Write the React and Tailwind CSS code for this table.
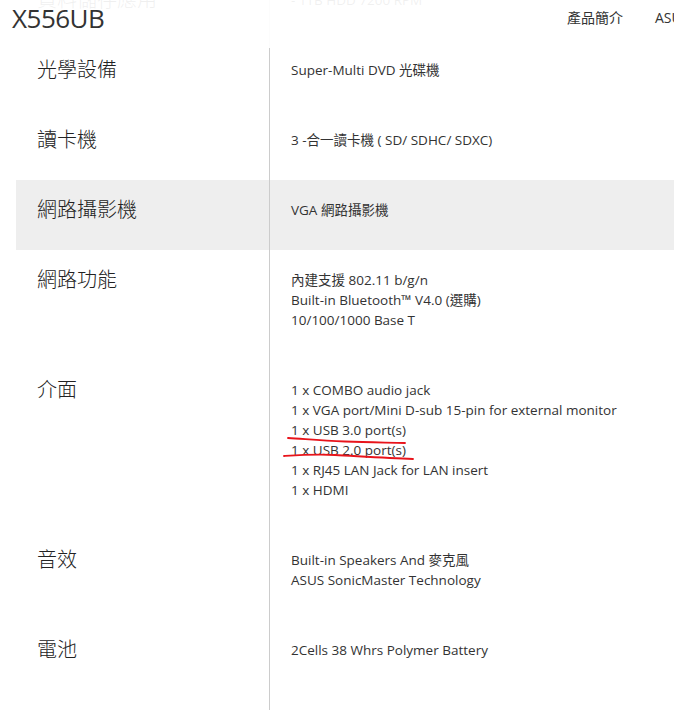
import React from 'react';

const specs = [
  { label: '資料儲存應用', lines: ['- 1TB HDD 7200 RPM'] },
  { label: '光學設備', lines: ['Super-Multi DVD 光碟機'] },
  { label: '讀卡機', lines: ['3 -合一讀卡機 ( SD/ SDHC/ SDXC)'] },
  { label: '網路攝影機', lines: ['VGA 網路攝影機'], shaded: true },
  {
    label: '網路功能',
    lines: ['內建支援 802.11 b/g/n', 'Built-in Bluetooth™ V4.0 (選購)', '10/100/1000 Base T'],
  },
  {
    label: '介面',
    lines: [
      '1 x COMBO audio jack',
      '1 x VGA port/Mini D-sub 15-pin for external monitor',
      '1 x USB 3.0 port(s)',
      '1 x USB 2.0 port(s)',
      '1 x RJ45 LAN Jack for LAN insert',
      '1 x HDMI',
    ],
  },
  { label: '音效', lines: ['Built-in Speakers And 麥克風', 'ASUS SonicMaster Technology'] },
  { label: '電池', lines: ['2Cells 38 Whrs Polymer Battery'] },
];

const font = { fontFamily: '"Open Sans", "Noto Sans CJK TC", sans-serif' };

const SpecRow = ({ label, lines, shaded }) => (
  <div className={`flex ${shaded ? 'bg-[#eeeeee]' : ''}`}>
    <div className="w-[254px] shrink-0 border-r border-[#cccccc] pl-[21px] pt-[20px] pb-[30px] text-[20px] leading-[20px] font-light text-[#222222]">
      {label}
    </div>
    <div className="pl-[21px] pt-[20px] pb-[30px] text-[13.5px] leading-[20px] text-[#333333] whitespace-nowrap">
      {lines.map((l, i) => (
        <div key={i}>{l}</div>
      ))}
    </div>
  </div>
);

export default function App() {
  return (
    <div className="relative h-[710px] w-[674px] overflow-hidden bg-white" style={font}>
      {/* spec table, scrolled a little */}
      <div className="mt-[-30px] pl-[16px]">
        {specs.map((s) => (
          <SpecRow key={s.label} {...s} />
        ))}
        {/* table continues below the fold */}
        <div className="flex h-[60px]">
          <div className="w-[254px] shrink-0 border-r border-[#cccccc]" />
        </div>
      </div>

      {/* hand-drawn red marks */}
      <svg className="absolute left-0 top-0 pointer-events-none" width="674" height="710">
        <path d="M288 438 C 305 439, 320 440.5, 345 441.5 S 390 442.5, 405 443" fill="none" stroke="#e8141b" strokeWidth="1.8" strokeLinecap="round" />
        <path d="M284 456 C 300 455, 315 454, 335 455 S 385 458, 413 459" fill="none" stroke="#e8141b" strokeWidth="1.8" strokeLinecap="round" />
      </svg>

      {/* sticky header */}
      <div className="absolute left-0 top-0 h-[48px] w-[800px] bg-white/[0.93] flex whitespace-nowrap">
        <div className="w-[567px] pl-[12px] pt-[1px] text-[26px] leading-[34px] tracking-[-0.5px] text-[#333333]">X556UB</div>
        <div className="flex gap-[32px] pt-[8px] text-[14px] leading-[20px] text-[#333333]">
          <span>產品簡介</span>
          <span>ASUS 推薦</span>
        </div>
      </div>
    </div>
  );
}
